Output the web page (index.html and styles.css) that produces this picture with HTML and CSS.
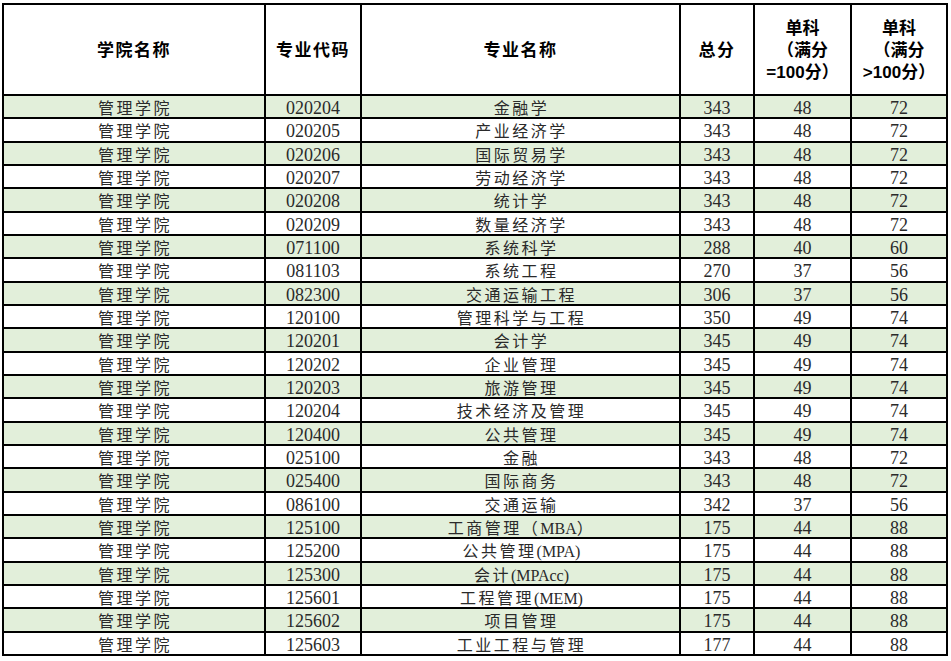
FILE: index.html
```html
<!DOCTYPE html>
<html lang="zh-CN">
<head>
<meta charset="utf-8">
<title>管理学院 复试分数线</title>
<link rel="stylesheet" href="styles.css">
</head>
<body>
<table class="score-table">
  <colgroup>
    <col class="c-college">
    <col class="c-code">
    <col class="c-major">
    <col class="c-total">
    <col class="c-single">
    <col class="c-single2">
  </colgroup>
  <thead>
    <tr class="head-row">
      <th>学院名称</th>
      <th>专业代码</th>
      <th>专业名称</th>
      <th>总分</th>
      <th class="multi">单科<br>（满分<br>=100分）</th>
      <th class="multi">单科<br>（满分<br>&gt;100分）</th>
    </tr>
  </thead>
  <tbody>
    <tr><td class="cn">管理学院</td><td>020204</td><td class="cn">金融学</td><td>343</td><td>48</td><td>72</td></tr>
    <tr><td class="cn">管理学院</td><td>020205</td><td class="cn">产业经济学</td><td>343</td><td>48</td><td>72</td></tr>
    <tr><td class="cn">管理学院</td><td>020206</td><td class="cn">国际贸易学</td><td>343</td><td>48</td><td>72</td></tr>
    <tr><td class="cn">管理学院</td><td>020207</td><td class="cn">劳动经济学</td><td>343</td><td>48</td><td>72</td></tr>
    <tr><td class="cn">管理学院</td><td>020208</td><td class="cn">统计学</td><td>343</td><td>48</td><td>72</td></tr>
    <tr><td class="cn">管理学院</td><td>020209</td><td class="cn">数量经济学</td><td>343</td><td>48</td><td>72</td></tr>
    <tr><td class="cn">管理学院</td><td>071100</td><td class="cn">系统科学</td><td>288</td><td>40</td><td>60</td></tr>
    <tr><td class="cn">管理学院</td><td>081103</td><td class="cn">系统工程</td><td>270</td><td>37</td><td>56</td></tr>
    <tr><td class="cn">管理学院</td><td>082300</td><td class="cn">交通运输工程</td><td>306</td><td>37</td><td>56</td></tr>
    <tr><td class="cn">管理学院</td><td>120100</td><td class="cn">管理科学与工程</td><td>350</td><td>49</td><td>74</td></tr>
    <tr><td class="cn">管理学院</td><td>120201</td><td class="cn">会计学</td><td>345</td><td>49</td><td>74</td></tr>
    <tr><td class="cn">管理学院</td><td>120202</td><td class="cn">企业管理</td><td>345</td><td>49</td><td>74</td></tr>
    <tr><td class="cn">管理学院</td><td>120203</td><td class="cn">旅游管理</td><td>345</td><td>49</td><td>74</td></tr>
    <tr><td class="cn">管理学院</td><td>120204</td><td class="cn">技术经济及管理</td><td>345</td><td>49</td><td>74</td></tr>
    <tr><td class="cn">管理学院</td><td>120400</td><td class="cn">公共管理</td><td>345</td><td>49</td><td>74</td></tr>
    <tr><td class="cn">管理学院</td><td>025100</td><td class="cn">金融</td><td>343</td><td>48</td><td>72</td></tr>
    <tr><td class="cn">管理学院</td><td>025400</td><td class="cn">国际商务</td><td>343</td><td>48</td><td>72</td></tr>
    <tr><td class="cn">管理学院</td><td>086100</td><td class="cn">交通运输</td><td>342</td><td>37</td><td>56</td></tr>
    <tr><td class="cn">管理学院</td><td>125100</td><td class="cn">工商管理（<span class="lat">MBA</span>）</td><td>175</td><td>44</td><td>88</td></tr>
    <tr><td class="cn">管理学院</td><td>125200</td><td class="cn">公共管理<span class="lat">(MPA)</span></td><td>175</td><td>44</td><td>88</td></tr>
    <tr><td class="cn">管理学院</td><td>125300</td><td class="cn">会计<span class="lat">(MPAcc)</span></td><td>175</td><td>44</td><td>88</td></tr>
    <tr><td class="cn">管理学院</td><td>125601</td><td class="cn">工程管理<span class="lat">(MEM)</span></td><td>175</td><td>44</td><td>88</td></tr>
    <tr><td class="cn">管理学院</td><td>125602</td><td class="cn">项目管理</td><td>175</td><td>44</td><td>88</td></tr>
    <tr><td class="cn">管理学院</td><td>125603</td><td class="cn">工业工程与管理</td><td>177</td><td>44</td><td>88</td></tr>
  </tbody>
</table>
</body>
</html>
```

FILE: styles.css
```css
html, body {
  margin: 0;
  padding: 0;
  background: #ffffff;
}

body {
  padding: 3px 0 0 2px;
}

.score-table {
  border-collapse: collapse;
  table-layout: fixed;
  width: 946px;
  border: 2px solid #000;
}

.c-college { width: 262px; }
.c-code { width: 96px; }
.c-major { width: 319px; }
.c-total { width: 74px; }
.c-single { width: 97px; }
.c-single2 { width: 96px; }

.score-table th,
.score-table td {
  border: 2px solid #000;
  padding: 0;
  text-align: center;
  vertical-align: middle;
  overflow: hidden;
  white-space: nowrap;
}

.head-row {
  height: 91px;
}

.score-table th {
  font-family: "Liberation Sans", "Noto Sans CJK SC", sans-serif;
  font-weight: 700;
  font-size: 17px;
  letter-spacing: 1.5px;
  color: #000;
  line-height: 22px;
  padding-top: 3px;
}

.score-table th.multi {
  letter-spacing: 0;
  padding-top: 2px;
}

.score-table tbody tr {
  height: 23.33px;
}

.score-table tbody tr:nth-child(odd) {
  background: #e2efda;
}

.score-table td {
  font-family: "Liberation Serif", "Noto Sans CJK SC", serif;
  font-size: 18px;
  line-height: 17px;
  color: #2a2a2a;
  padding-top: 4px;
  vertical-align: top;
}

.score-table td.cn {
  font-size: 16px;
  letter-spacing: 2.5px;
  text-indent: 2px;
}

.score-table td.cn .lat {
  letter-spacing: 0;
  font-size: 16px;
}
```
